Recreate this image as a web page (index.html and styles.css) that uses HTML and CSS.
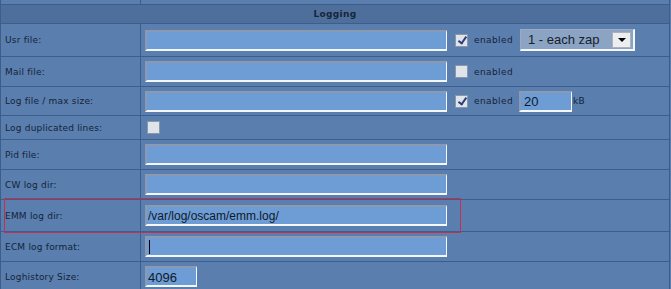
FILE: index.html
```html
<!DOCTYPE html>
<html lang="en">
<head>
    <meta charset="UTF-8">
    <title>OSCam - Logging</title>
    <link rel="stylesheet" href="styles.css">
</head>
<body>
    <table class="config">
        <tr class="strip">
            <td class="label"></td>
            <td></td>
        </tr>
        <tr class="head">
            <th colspan="2">Logging</th>
        </tr>
        <tr class="r33">
            <td class="label">Usr file:</td>
            <td>
                <div class="line">
                    <input class="long" type="text" value="">
                    <span class="check on"></span>
                    <span class="opt">enabled</span>
                    <div class="select">
                        <span>1 - each zap</span>
                        <span class="drop"><i></i></span>
                    </div>
                </div>
            </td>
        </tr>
        <tr class="r30">
            <td class="label">Mail file:</td>
            <td>
                <div class="line">
                    <input class="long" type="text" value="">
                    <span class="check"></span>
                    <span class="opt">enabled</span>
                </div>
            </td>
        </tr>
        <tr class="r29">
            <td class="label">Log file / max size:</td>
            <td>
                <div class="line">
                    <input class="long" type="text" value="">
                    <span class="check on"></span>
                    <span class="opt">enabled</span>
                    <input class="size" type="text" value="20">
                    <span class="unit">kB</span>
                </div>
            </td>
        </tr>
        <tr class="r24">
            <td class="label">Log duplicated lines:</td>
            <td>
                <div class="line">
                    <span class="check first"></span>
                </div>
            </td>
        </tr>
        <tr class="r30">
            <td class="label">Pid file:</td>
            <td><div class="line"><input class="long" type="text" value=""></div></td>
        </tr>
        <tr class="r30">
            <td class="label">CW log dir:</td>
            <td><div class="line"><input class="long" type="text" value=""></div></td>
        </tr>
        <tr class="r32">
            <td class="label">EMM log dir:</td>
            <td><div class="line"><input class="long" type="text" value="/var/log/oscam/emm.log/"></div></td>
        </tr>
        <tr class="r30">
            <td class="label">ECM log format:</td>
            <td><div class="line"><div class="long fake"><span class="caret"></span></div></div></td>
        </tr>
        <tr class="r30">
            <td class="label">Loghistory Size:</td>
            <td><div class="line"><input class="short" type="text" value="4096"></div></td>
        </tr>
    </table>
    <div class="highlight"></div>
</body>
</html>
```

FILE: styles.css
```css
body {
    margin: 0;
    background-color: #5a7ead;
    font-family: "DejaVu Sans", Verdana, sans-serif;
    overflow: hidden;
    position: relative;
}
.config {
    width: 670px;
    border-collapse: collapse;
    border-right: 1px solid #3d5e8d;
}
.config td {
    border: 1px solid #3d5e8d;
    padding: 0 0 0 4px;
    font-size: 9px;
    letter-spacing: 0.2px;
    color: #14243a;
    background-color: #5a7ead;
}
.config td.label {
    width: 135px;
}
.strip td {
    height: 4px;
    border-top: none;
}
.head th {
    height: 18px;
    padding: 0;
    background-color: #4e6f9b;
    border: 1px solid #3d5e8d;
    font-size: 9px;
    font-weight: bold;
    letter-spacing: 0.3px;
    color: #16263c;
    text-align: center;
}
.r33 td { height: 32px; }
.r32 td { height: 31px; }
.r30 td { height: 29px; }
.r29 td { height: 28px; }
.r24 td { height: 23px; }
.line {
    display: flex;
    align-items: center;
}
.long, .size, .short {
    box-sizing: border-box;
    height: 21px;
    margin: 0;
    padding: 1px 2px 0 1px;
    background-color: #6e9cd5;
    border-style: solid;
    border-width: 2px 1px 2px 2px;
    border-color: #8b9ab0 #f4f7fb #f4f7fb #8b9ab0;
    font-family: "Liberation Sans", Arial, sans-serif;
    font-size: 12px;
    color: #101a28;
    outline: none;
}
.long {
    width: 302px;
}
.size {
    width: 53px;
    margin-left: 6px;
    font-size: 13px;
    padding-left: 3px;
}
.short {
    width: 52px;
    font-size: 13px;
}
.fake {
    display: flex;
    align-items: center;
}
.caret {
    display: block;
    width: 1px;
    height: 14px;
    background-color: #000;
    margin-left: 1px;
}
.check {
    box-sizing: border-box;
    width: 13px;
    height: 13px;
    margin-left: 8px;
    background-color: #dfe4ea;
    border: 1px solid #8a97a8;
    position: relative;
}
.check.first {
    margin-left: 2px;
}
.check.on::after {
    content: "";
    position: absolute;
    left: 4px;
    top: 0px;
    width: 3px;
    height: 7px;
    border: solid #2c3f78;
    border-width: 0 2px 2px 0;
    transform: rotate(35deg);
}
.opt {
    margin-left: 6px;
    letter-spacing: 0.4px;
}
.unit {
    margin-left: 1px;
}
.select {
    box-sizing: border-box;
    width: 115px;
    height: 22px;
    margin-left: 7px;
    display: flex;
    align-items: center;
    justify-content: space-between;
    padding: 0 2px 0 7px;
    background-color: #8ba4c4;
    border-style: solid;
    border-width: 1px 2px 2px 1px;
    border-color: #9aabc0 #f4f7fb #f4f7fb #9aabc0;
    font-family: "Liberation Sans", Arial, sans-serif;
    font-size: 13px;
    letter-spacing: 0;
    color: #18202c;
}
.drop {
    width: 17px;
    height: 14px;
    background-color: #eceef0;
    border: 1px solid #a9b2bd;
    display: flex;
    align-items: center;
    justify-content: center;
}
.drop i {
    width: 0;
    height: 0;
    border-left: 4px solid transparent;
    border-right: 4px solid transparent;
    border-top: 4px solid #000;
}
.highlight {
    position: absolute;
    left: 4px;
    top: 198px;
    width: 455px;
    height: 33px;
    border: 1px solid #c3304f;
    pointer-events: none;
}
```
